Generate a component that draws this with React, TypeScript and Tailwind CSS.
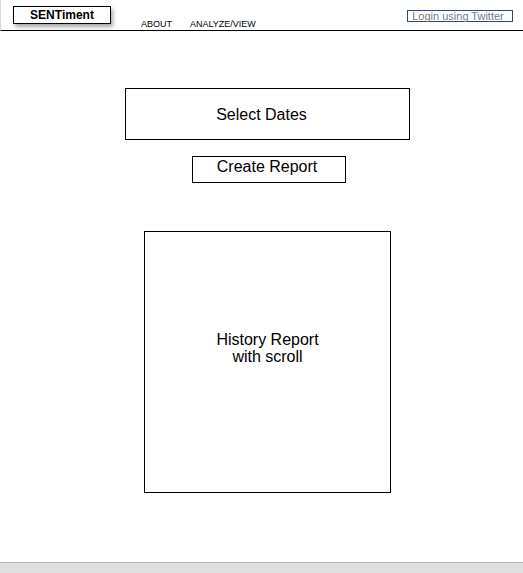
import React from "react";

export default function App() {
  const font = { fontFamily: '"Liberation Sans", Arial, sans-serif' };
  return (
    <div className="flex h-[573px] w-[523px] flex-col bg-white text-black" style={font}>
      <header className="relative h-[31px] shrink-0 border-b border-l border-b-black border-l-[#d8d8d8]">
        <div className="absolute left-[12px] top-[6px] flex h-[18px] w-[98px] items-center justify-center border border-black bg-white text-[12px] font-bold leading-none shadow-[2px_3px_4px_rgba(0,0,0,0.35)]">
          SENTiment
        </div>
        <div className="absolute left-[140px] top-[19px] flex gap-[18px] text-[9px] leading-[10px]">
          <span>ABOUT</span>
          <span>ANALYZE/VIEW</span>
        </div>
        <div className="absolute left-[406px] top-[10px] flex h-[12px] w-[106px] items-center justify-center border border-[#2b4a78] pr-[4px] text-[11px] leading-none text-[#7a7a7a]">
          Login using Twitter
        </div>
      </header>
      <main className="flex grow flex-col">
        <div className="ml-[125px] mt-[57px] flex h-[52px] w-[285px] items-center justify-center border border-black pr-[12px] pt-[2px] text-[16px] leading-none">
          Select Dates
        </div>
        <div className="ml-[192px] mt-[16px] flex h-[27px] w-[154px] justify-center border border-black pr-[4px] pt-[1px] text-[16px] leading-[18px]">
          Create Report
        </div>
        <div className="ml-[144px] mt-[48px] flex h-[262px] w-[247px] items-center justify-center border border-black pb-[28px] text-center text-[16px] leading-[17px]">
          <div>
            History Report
            <br />
            with scroll
          </div>
        </div>
      </main>
      <footer className="h-[11px] shrink-0 border-t border-[#b5b5b5] bg-[#dedede]" />
    </div>
  );
}
